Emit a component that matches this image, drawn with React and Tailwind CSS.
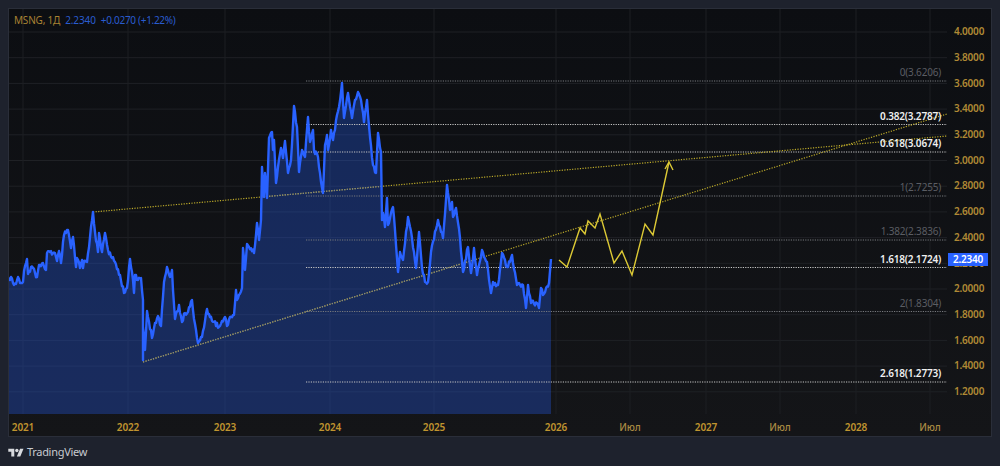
const RAW_PRICE = "8,279 11,277 13,283 16,284 18,277 20,283 23,282 24,271 27,259 28,274 31,267 33,268 37,277 39,265 43,263 46,270 47,253 55,253 57,261 59,251 61,263 64,235 68,230 71,248 73,237 76,267 77,258 80,268 82,260 83,268 84,261 87,262 90,237 93,212 95,232 98,252 99,233 102,252 105,233 108,250 112,258 115,262 120,275 124,293 127,288 130,259 132,272 134,293 135,275 138,280 141,278 143,300 143,360 143,327 145,350 147,311 152,338 155,323 158,316 161,326 164,282 167,267 170,277 172,270 173,290 175,319 179,305 182,322 185,313 188,312 192,300 193,310 196,330 198,343 202,337 207,309 210,317 219,327 225,317 227,326 230,317 234,315 236,290 237,300 242,288 243,248 245,270 247,244 254,253 257,223 259,240 261,220 262,167 264,197 265,173 267,198 269,138 272,132 273,150 274,140 276,183 278,167 281,148 283,158 285,141 288,173 291,160 294,106 297,127 299,172 302,150 305,157 308,117 310,142 313,130 314,150 318,157 320,173 323,193 325,145 327,135 328,150 331,130 333,140 337,115 339,107 342,83 344,118 348,93 352,118 355,100 358,92 361,100 364,122 367,100 370,137 373,165 376,173 378,133 381,152 382,220 383,213 385,227 387,198 388,225 393,207 395,230 398,272 400,252 403,260 408,217 412,238 416,268 419,232 422,268 425,282 428,282 431,252 438,220 441,232 443,238 447,185 450,210 452,202 453,217 456,208 460,238 463,272 468,247 471,273 474,248 477,275 482,250 487,262 491,293 493,282 498,285 502,253 507,267 512,255 517,285 523,285 526,308 528,285 531,303 537,303 539,308 541,288 543,295 549,283 551,259";

// daily closes wobble between the swing points
function roughen(raw) {
  const pts = raw.split(" ").map((p) => p.split(",").map(Number));
  const out = [];
  pts.forEach(([x, y], i) => {
    out.push(`${x},${y}`);
    const next = pts[i + 1];
    if (!next || next[0] - x < 2) return;
    const steps = next[0] - x;
    for (let s = 1; s < steps; s++) {
      const t = s / steps;
      const n = Math.sin((x + s) * 12.9898) * 43758.5453;
      const wob = (n - Math.floor(n) - 0.5) * 5;
      out.push(`${(x + (next[0] - x) * t).toFixed(1)},${(y + (next[1] - y) * t + wob).toFixed(1)}`);
    }
  });
  return out.join(" ");
}

const PRICE = roughen(RAW_PRICE);

const PRICE_TICKS = ["4.0000", "3.8000", "3.6000", "3.4000", "3.2000", "3.0000", "2.8000", "2.6000", "2.4000", "2.2000", "2.0000", "1.8000", "1.6000", "1.4000", "1.2000"];

const TIME_TICKS = [
  { x: 23, label: "2021" },
  { x: 128, label: "2022" },
  { x: 225, label: "2023" },
  { x: 330, label: "2024" },
  { x: 434, label: "2025" },
  { x: 556, label: "2026" },
  { x: 630, label: "Июл", thin: true },
  { x: 706, label: "2027" },
  { x: 780, label: "Июл", thin: true },
  { x: 856, label: "2028" },
  { x: 930, label: "Июл", thin: true },
];

const FIB = [
  { y: 81, label: "0(3.6206)" },
  { y: 124.5, label: "0.382(3.2787)", hot: true },
  { y: 152, label: "0.618(3.0674)", hot: true },
  { y: 196, label: "1(2.7255)" },
  { y: 240, label: "1.382(2.3836)" },
  { y: 267.5, label: "1.618(2.1724)", hot: true },
  { y: 311.5, label: "2(1.8304)" },
  { y: 382, label: "2.618(1.2773)", hot: true },
];

const FONT = { fontFamily: '"Noto Sans", sans-serif' };

function Trends({ stroke }) {
  return (
    <g stroke={stroke} strokeWidth="1.2" strokeDasharray="1.2 1.4">
      <line x1="93" y1="212" x2="947" y2="136" />
      <line x1="143" y1="362" x2="947" y2="114" />
    </g>
  );
}

function Chart() {
  return (
    <svg width="938" height="405" viewBox="9 9 938 405" className="block" style={FONT}>
      <defs>
        <clipPath id="area">
          <polygon points={`8,414 ${RAW_PRICE} 551,414`} />
        </clipPath>
      </defs>
      {PRICE_TICKS.map((_, i) => (
        <line key={i} x1="9" x2="947" y1={32 + i * 25.7} y2={32 + i * 25.7} stroke="#1f2125" />
      ))}
      {TIME_TICKS.map((t) => (
        <line key={t.x} x1={t.x} x2={t.x} y1="9" y2="414" stroke="#1c1e22" />
      ))}
      <polygon points={`8,414 ${RAW_PRICE} 551,414`} fill="#2962ff" fillOpacity="0.3" />
      {FIB.map((f) => (
        <line key={f.y} x1="306" x2="947" y1={f.y} y2={f.y} stroke={f.hot ? "#c4c4c4" : "#76787d"} strokeWidth="1.2" strokeDasharray="1.2 1.2" />
      ))}
      <Trends stroke="#bcaa2a" />
      <g clipPath="url(#area)">
        <Trends stroke="#85877c" />
      </g>
      <polyline points={PRICE} fill="none" stroke="#2962ff" strokeWidth="2.4" strokeLinejoin="round" />
      <polyline points="559,260 567,267 580,228 585,234 588,221 595,228 600,214 614,263 622,251 632,275 645,224 653,235 669,162" fill="none" stroke="#dcc935" strokeWidth="1.4" />
      <polyline points="665,169 669,162 673,170" fill="none" stroke="#dcc935" strokeWidth="1.4" />
      {FIB.map((f) => (
        <text key={f.label} x="941" y={f.y - 5} textAnchor="end" fontSize="10" letterSpacing="-0.2" fontWeight={f.hot ? 600 : 400} fill={f.hot ? "#f0f0f0" : "#5b5d63"}>
          {f.label}
        </text>
      ))}
    </svg>
  );
}

export default function App() {
  return (
    <div className="flex h-[466px] w-[1000px] flex-col bg-[#1e222d] px-2 pt-2" style={FONT}>
      <div className="h-[429px] w-[984px] border border-[#2a2e39] bg-linear-to-b from-[#0c0e12] to-[#141518]">
        <div className="flex h-[405px]">
          <div className="relative w-[938px]">
            <Chart />
            <div className="absolute left-[5px] top-[4px] flex gap-[5px] text-[10px] text-[#2a5ccf]">
              <span className="tracking-[-0.2px] text-[#a98232]">MSNG, 1Д</span>
              <span className="tracking-[-0.1px]">2.2340</span>
              <span className="tracking-[-0.3px]">+0.0270 (+1.22%)</span>
            </div>
          </div>
          <div className="relative flex-1 pt-[10px]">
            {PRICE_TICKS.map((p) => (
              <div key={p} className="flex h-[25.7px] items-center pl-[7px] text-[10px] font-semibold tracking-[-0.2px] text-[#b08a35]">
                {p}
              </div>
            ))}
            <div className="absolute left-px top-[244px] flex h-[13px] w-10 items-center justify-center bg-[#2962ff] text-[10px] font-semibold tracking-[-0.2px] text-white">
              2.2340
            </div>
          </div>
        </div>
        <div className="flex h-[22px] items-center pl-[14px]">
          {TIME_TICKS.map((t, i) => (
            <div key={t.x} className="shrink-0" style={{ width: (TIME_TICKS[i + 1]?.x ?? t.x + 40) - t.x }}>
              <span className={`inline-block -translate-x-1/2 text-[10px] tracking-[-0.1px] ${t.thin ? "font-medium text-[#a98a42]" : "font-semibold text-[#c0942f]"}`}>
                {t.label}
              </span>
            </div>
          ))}
        </div>
      </div>
      <div className="flex flex-1 items-center gap-[3px] pt-0.5">
        <svg width="16" height="12" viewBox="0 0 36 28" fill="#d8dade">
          <path d="M14 22H7V11H0V4h14v18zM28 22h-8l7.5-18h8L28 22z" />
          <circle cx="20" cy="8" r="4" />
        </svg>
        <span className="text-[11px] tracking-[-0.3px] text-[#c8cad0]">TradingView</span>
      </div>
    </div>
  );
}
